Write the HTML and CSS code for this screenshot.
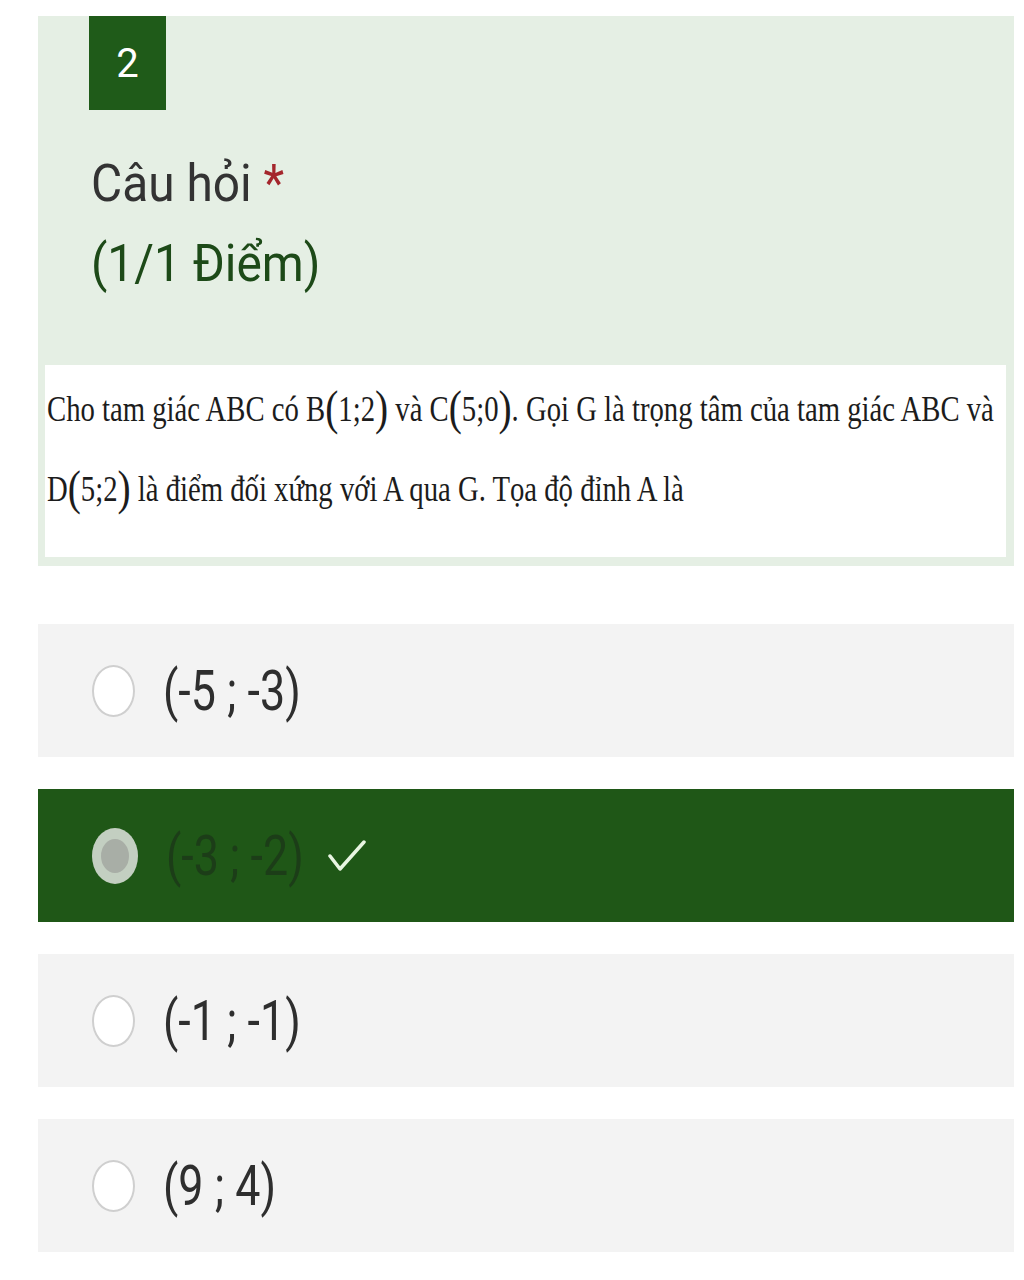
FILE: index.html
```html
<!DOCTYPE html>
<html lang="vi">
<head>
  <meta charset="UTF-8" />
  <meta name="viewport" content="width=device-width, initial-scale=1.0" />
  <title>Câu hỏi 2</title>
  <link rel="stylesheet" href="styles.css">
</head>
<body>
  <!-- Question card -->
  <div class="question-card">
    <div class="q-number">2</div>
    <div class="q-title">
      <div class="q-label">Câu hỏi <span class="required">*</span></div>
      <div class="q-points">(1/1 Điểm)</div>
    </div>
    <div class="q-body">
      <p>Cho tam giác ABC có B<span class="paren">(</span>1;2<span class="paren">)</span> và C<span class="paren">(</span>5;0<span class="paren">)</span>. Gọi G là trọng tâm của tam giác ABC và</p>
      <p>D<span class="paren">(</span>5;2<span class="paren">)</span> là điểm đối xứng với A qua G. Tọa độ đỉnh A là</p>
    </div>
  </div>

  <!-- Choices -->
  <div class="choices">
    <div class="choice">
      <span class="radio"></span>
      <span class="choice-text">(-5 ; -3)</span>
    </div>
    <div class="choice selected">
      <span class="radio"><span class="dot"></span></span>
      <span class="choice-text">(-3 ; -2)</span>
      <svg class="check" width="38" height="34" viewBox="0 0 38 34">
        <path d="M2 17 L12 30 L36 3" fill="none" stroke="#e8f5e2" stroke-width="3.5" stroke-linecap="round" stroke-linejoin="round"/>
      </svg>
    </div>
    <div class="choice">
      <span class="radio"></span>
      <span class="choice-text">(-1 ; -1)</span>
    </div>
    <div class="choice">
      <span class="radio"></span>
      <span class="choice-text">(9 ; 4)</span>
    </div>
  </div>
</body>
</html>
```

FILE: styles.css
```css
* {
  box-sizing: border-box;
}

body {
  font-family: Roboto, "Liberation Sans", Arial, sans-serif;
  margin: 0;
  padding: 16px 10px 20px 38px;
  background: #ffffff;
  color: #323232;
}

.question-card {
  background: #e5efe4;
  padding: 0 8px 9px 7px;
}

.q-number {
  width: 77px;
  height: 94px;
  margin-left: 44px;
  background: #1f5b19;
  color: #ffffff;
  font-size: 40px;
  display: flex;
  align-items: center;
  justify-content: center;
}

.q-title {
  margin-left: 46px;
  padding-top: 34px;
  height: 255px;
  font-size: 52px;
  line-height: 80px;
  transform: scaleX(0.92);
  transform-origin: left top;
}

.q-label {
  color: #333333;
}

.required {
  color: #a4262c;
}

.q-points {
  color: #1d4a18;
}

.q-body {
  background: #ffffff;
  height: 192px;
  padding: 5px 0 0 2px;
  font-family: "Liberation Serif", "Times New Roman", serif;
  font-size: 35px;
  color: #1c1c1c;
  white-space: nowrap;
}

.q-body p {
  margin: 0;
  line-height: 80px;
  transform: scaleX(0.82);
  transform-origin: left center;
}

.paren {
  font-size: 48px;
  font-weight: 300;
  vertical-align: -3px;
  line-height: 0;
}

.choices {
  margin-top: 58px;
  display: flex;
  flex-direction: column;
  gap: 32px;
}

.choice {
  height: 133px;
  background: #f3f3f3;
  display: flex;
  align-items: center;
  padding-left: 54px;
}

.radio {
  width: 43px;
  height: 52px;
  border: 2px solid #cfcfcf;
  border-radius: 50%;
  background: #ffffff;
  display: flex;
  align-items: center;
  justify-content: center;
  flex-shrink: 0;
}

.choice-text {
  margin-left: 28px;
  font-size: 56px;
  color: #2e2e2e;
  transform: scaleX(0.8);
  transform-origin: left center;
}

.choice.selected {
  background: #1f5717;
}

.choice.selected .radio {
  background: #c3cfc1;
  border: none;
  width: 46px;
  height: 56px;
}

.dot {
  width: 28px;
  height: 34px;
  border-radius: 50%;
  background: #a8aea6;
}

.choice.selected .choice-text {
  color: #1c3d18;
}

.check {
  margin-left: -10px;
}
```
